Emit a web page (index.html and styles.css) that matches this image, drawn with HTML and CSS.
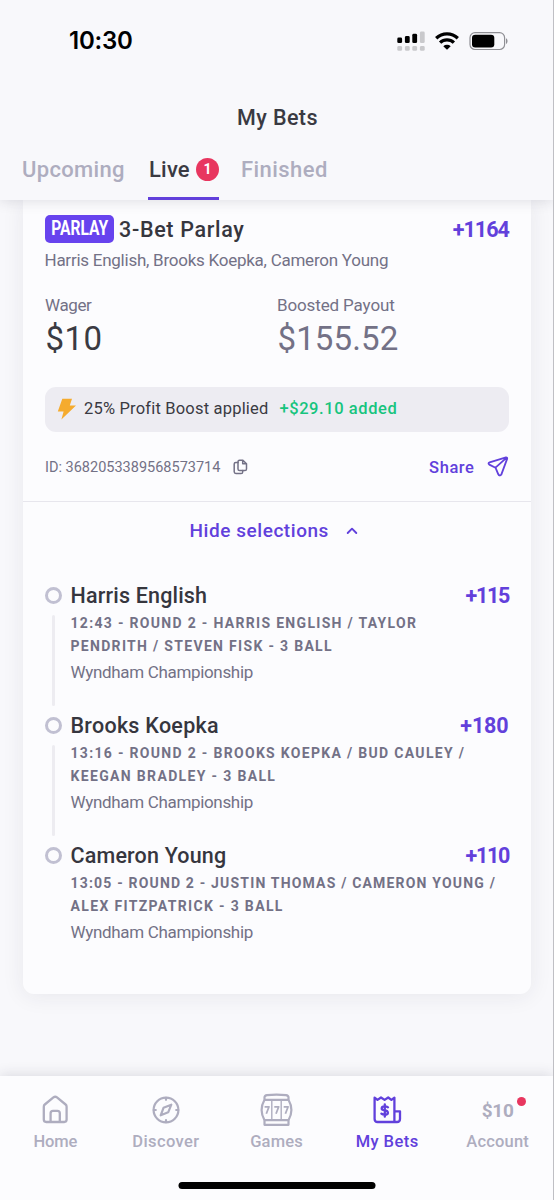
FILE: index.html
```html
<!DOCTYPE html>
<html lang="en">
<head>
<meta charset="utf-8">
<title>My Bets</title>
<link rel="stylesheet" href="styles.css">
</head>
<body>
<div class="screen">
  <header class="header">
    <div class="status">
      <span class="clock">10:30</span>
      <svg class="status-icons" width="112" height="22" viewBox="396 30 112 22">
        <g fill="#000"><rect x="397.3" y="37.5" width="4.8" height="5.6" rx="1.4"/><rect x="404.9" y="36" width="4.8" height="7.1" rx="1.4"/><rect x="412.3" y="33.8" width="4.8" height="9.3" rx="1.4"/></g>
        <g fill="#c9c9cc"><rect x="419.9" y="31.5" width="4.8" height="11.6" rx="1.4"/><rect x="397.3" y="46" width="4.8" height="4.8" rx="1.4"/><rect x="404.9" y="46" width="4.8" height="4.8" rx="1.4"/><rect x="412.3" y="46" width="4.8" height="4.8" rx="1.4"/><rect x="419.9" y="46" width="4.8" height="4.8" rx="1.4"/></g>
        <g fill="none" stroke="#000" stroke-width="3.3"><path d="M436.200 38.200a15.600 15.600 0 0 1 21.600 0"/><path d="M440.100 42.600a10 10 0 0 1 13.800 0"/></g>
        <path d="M443.300 46.200a5.400 5.400 0 0 1 7.400 0l-3.700 3.600z"/>
        <rect x="470" y="32.700" width="34.600" height="16.800" rx="5" fill="none" stroke="#8f8f94" stroke-width="1.200"/>
        <rect x="472" y="34.700" width="22.300" height="12.800" rx="3.300"/>
        <path d="M506 38.300c2 .8 2 4.800 0 5.600z" fill="#8f8f94"/>
      </svg>
    </div>
    <h1 class="title">My Bets</h1>
    <nav class="tabs">
      <a class="tab upcoming">Upcoming</a>
      <a class="tab active">Live<span class="count">1</span></a>
      <a class="tab finished">Finished</a>
    </nav>
  </header>

  <main class="content">
    <article class="card">
      <section class="summary">
        <div class="heading">
          <span class="badge"><span class="badge-text">PARLAY</span></span>
          <h2 class="name bet-name">3-Bet Parlay</h2>
          <span class="odds odds-total">+1164</span>
        </div>
        <p class="players">Harris English, Brooks Koepka, Cameron Young</p>
        <div class="amounts">
          <div><p class="label wager">Wager</p><p class="amount stake">$10</p></div>
          <div><p class="label">Boosted Payout</p><p class="amount payout">$155.52</p></div>
        </div>
        <div class="boost">
          <svg width="20" height="22" viewBox="0 0 20 22"><path d="M5.300 .7H15L12.800 7.600H19L4.400 21.500L6.600 13.600H.8z" fill="#f5ab2e"/></svg>
          <span class="boost-text">25% Profit Boost applied</span>
          <span class="boost-added">+$29.10 added</span>
        </div>
        <div class="meta">
          <span class="bet-id">ID: 3682053389568573714</span>
          <svg class="copy" width="15" height="16" viewBox="0 0 15 16" fill="none" stroke="#737186" stroke-width="1.500" stroke-linejoin="round" stroke-linecap="round"><path d="M6.600 1.200h3.300l3.600 3.500v5.200a1.600 1.600 0 0 1-1.600 1.600H6.600A1.600 1.600 0 0 1 5 9.900V2.800a1.600 1.600 0 0 1 1.600-1.600zM9.700 1.400v3.400h3.600"/><path d="M5 3.400H2.800a1.600 1.600 0 0 0-1.600 1.600v7.800a1.700 1.700 0 0 0 1.700 1.700h5.200a1.600 1.600 0 0 0 1.600-1.600v-1.400"/></svg>
          <span class="share">Share</span>
          <svg width="22" height="22" viewBox="0 0 22 22" fill="none" stroke="#6140dc" stroke-width="1.800" stroke-linejoin="round" stroke-linecap="round"><path d="M19 1.400L2.600 6.300Q.6 7.200 2.300 8.600L8.500 11.700L11.300 18.300Q12.500 20.500 14.300 18.600L20.200 2.600Q20.300 1.200 19 1.400zM8.500 11.700L19.700 1.700"/></svg>
        </div>
      </section>
      <div class="toggle">
        <span>Hide selections</span>
        <svg width="12" height="8" viewBox="0 0 12 8" fill="none" stroke="#6140dc" stroke-width="1.900" stroke-linecap="round" stroke-linejoin="round"><path d="M1.700 6L6 1.700L10.300 6"/></svg>
      </div>
      <ol class="legs">
        <li class="leg">
          <div class="rail"><i class="ring"></i><i class="line"></i></div>
          <div class="leg-body">
            <div class="leg-head"><h3 class="name english">Harris English</h3><span class="odds odds-115">+115</span></div>
            <p class="market">12:43 - ROUND 2 - HARRIS ENGLISH / TAYLOR<br>PENDRITH / STEVEN FISK - 3 BALL</p>
            <p class="event">Wyndham Championship</p>
          </div>
        </li>
        <li class="leg">
          <div class="rail"><i class="ring"></i><i class="line"></i></div>
          <div class="leg-body">
            <div class="leg-head"><h3 class="name koepka">Brooks Koepka</h3><span class="odds odds-180">+180</span></div>
            <p class="market">13:16 - ROUND 2 - BROOKS KOEPKA / BUD CAULEY /<br><span class="wide">KEEGAN BRADLEY - 3 BALL</span></p>
            <p class="event">Wyndham Championship</p>
          </div>
        </li>
        <li class="leg">
          <div class="rail"><i class="ring"></i></div>
          <div class="leg-body">
            <div class="leg-head"><h3 class="name young">Cameron Young</h3><span class="odds odds-110">+110</span></div>
            <p class="market last">13:05 - ROUND 2 - JUSTIN THOMAS / CAMERON YOUNG /<br><span class="wide">ALEX FITZPATRICK - 3 BALL</span></p>
            <p class="event">Wyndham Championship</p>
          </div>
        </li>
      </ol>
    </article>
  </main>

  <footer class="footer">
    <nav class="nav">
      <a class="item home"><svg width="34" height="34" viewBox="0 0 34 34" fill="none" stroke="currentColor" stroke-width="2.300" stroke-linejoin="round"><path d="M15.400 4.400L6.800 11.500Q5.800 12.300 5.800 13.700V26.600Q5.800 29 8.200 29H26.200Q28.600 29 28.600 26.600V13.700Q28.600 12.300 27.600 11.500L19 4.400Q17.200 3 15.400 4.400z"/><path d="M12.600 29V20.200Q12.600 17.800 15 17.800H19.400Q21.800 17.800 21.800 20.200V29"/></svg><span>Home</span></a>
      <a class="item discover"><svg width="34" height="34" viewBox="0 0 34 34" fill="none" stroke="currentColor" stroke-width="2.200" stroke-linejoin="round" stroke-linecap="round"><circle cx="17" cy="17" r="12.400"/><path d="M17 4.800v2M17 27.200v2M4.800 17h2M27.200 17h2M11.700 22.300L14.500 14.800L22.300 11.700L19.200 19.300z"/></svg><span>Discover</span></a>
      <a class="item games"><svg width="34" height="34" viewBox="0 0 34 34" fill="none" stroke="currentColor" stroke-width="2.200" stroke-linejoin="round"><path d="M5.500 6.800Q-.3 17 5.500 27.200H29.500Q35.300 17 29.500 6.800z"/><path d="M5.500 6.500V4.200Q5.700 2.400 8 2.100Q17.500 1 27 2.100Q29.300 2.400 29.500 4.200V6.500M5.500 27.500V31.800H29.500V27.500"/><path d="M12.800 7v20.500M22.200 7v20.500" stroke-width="1.400"/><path d="M5.600 13.800h4.400L7.300 20.800M15.300 13.800h4.400L17 20.800M24.700 13.800h4.400L26.400 20.800" stroke-width="1.800"/></svg><span>Games</span></a>
      <a class="item bets"><svg width="34" height="34" viewBox="0 0 34 34" fill="none" stroke="currentColor" stroke-width="2.300" stroke-linejoin="round" stroke-linecap="round"><path d="M24.400 29H7.600Q4.600 29 4.600 26V4.700L7.500 6.900L11 4.500L14.600 6.900L18.200 4.500L21.400 6.900L24.400 4.700V29H27Q30 29 30 26V18.300H24.400"/><path d="M18 14.300Q16.900 13.400 14.700 13.400Q11.700 13.400 11.700 15.500Q11.700 17 14.600 17.300Q17.900 17.600 17.900 19.700Q17.900 21.700 14.800 21.700Q12.500 21.700 11.400 20.600M14.800 11.300V23.700"/></svg><span>My Bets</span></a>
      <a class="item account"><b class="balance">$10<i class="dot"></i></b><span>Account</span></a>
    </nav>
    <div class="home-bar"></div>
  </footer>
</div>
</body>
</html>
```
FILE: styles.css
```css
* { box-sizing: border-box; }
body, h1, h2, h3, p, ol { margin: 0; padding: 0; }
body { background: #f8f8fb; font-family: Roboto, "Liberation Sans", sans-serif; color: #3a3a42; }
svg { display: block; flex: none; }

.screen {
  width: 554px; height: 1200px; overflow: hidden;
  display: flex; flex-direction: column;
  background: #f8f8fb; border-right: 1px solid #bfbfc4;
}

.header {
  position: relative; z-index: 2;
  height: 200px; flex: none; display: flex; flex-direction: column;
  background: #f8f8fb; box-shadow: 0 2px 12px rgba(40, 40, 60, .13);
}
.status { height: 82px; display: flex; justify-content: space-between; padding: 0 45px 0 69px; align-items: center; }
.clock { font: 600 24px/30px Inter, sans-serif; letter-spacing: -.23px; color: #000; }
.title { height: 69px; padding-left: 2px; font-size: 21.5px; line-height: 71px; font-weight: 500; letter-spacing: .4px; text-align: center; }
.tabs { height: 49px; display: flex; padding-left: 22px; }
.tab { font-size: 22px; line-height: 37px; font-weight: 500; color: #aeadbf; }
.upcoming { width: 126px; letter-spacing: .32px; }
.active { display: flex; align-items: center; width: 71px; height: 49px; padding: 0 0 9px 1px; border-bottom: 3px solid #6240db; color: #3a3a42; letter-spacing: .2px; }
.count {
  width: 23px; height: 23px; margin-left: auto; border-radius: 50%;
  background: #e8365f; color: #fff; font-size: 14px; font-weight: 700; line-height: 23px; text-align: center; letter-spacing: 0;
}
.finished { margin-left: 22px; letter-spacing: .44px; }

.content { flex: 1; padding: 0 22px 0 22.5px; }
.card {
  height: 794px; background: #fcfcfe; border-radius: 0 0 11px 11px;
  box-shadow: 0 2px 22px rgba(40, 40, 60, .08);
}
.summary { height: 302px; padding: 15px 22.5px 0 22.5px; border-bottom: 1px solid #e7e6ed; }
.heading { height: 28px; display: flex; align-items: center; }
.badge { width: 69px; height: 28px; border-radius: 5px; background: #6743ee; display: flex; align-items: center; justify-content: center; }
.badge-text { color: #fff; font-weight: 700; font-size: 19.5px; line-height: 28px; transform: scaleX(.8); }
.name { position: relative; top: 1px; font-size: 21.5px; line-height: 26px; font-weight: 500; color: #36363e; }
.bet-name { margin-left: 5px; letter-spacing: .68px; }
.odds { position: relative; top: 1px; margin-left: auto; font-size: 21.5px; line-height: 26px; font-weight: 700; color: #6240db; }
.odds-total { margin-right: -.5px; letter-spacing: -.95px; }
.players { margin: 7px 0 0 -.5px; font-size: 17px; line-height: 20px; letter-spacing: -.25px; color: #737186; }
.amounts { display: grid; grid-template-columns: 232px 1fr; margin-top: 25px; }
.label { font-size: 17px; line-height: 20px; letter-spacing: -.13px; color: #737186; }
.wager { letter-spacing: -.4px; }
.amount { margin-top: 4px; padding-left: .5px; font-size: 33px; line-height: 40px; }
.stake { letter-spacing: .45px; }
.payout { color: #737186; letter-spacing: .12px; }
.boost { height: 45px; margin-top: 28px; padding: 0 12px 2px; display: flex; align-items: center; border-radius: 11px; background: #edecf2; font-size: 16.5px; line-height: 42px; }
.boost-text { margin-left: 7px; letter-spacing: .19px; }
.boost-added { margin-left: 11px; font-weight: 500; letter-spacing: .58px; color: #17c47e; }
.meta { height: 30px; margin-top: 20px; display: flex; align-items: center; }
.bet-id { font-size: 14.5px; letter-spacing: 0; color: #737186; }
.copy { margin-left: 12.5px; }
.share { margin-left: auto; margin-right: 12px; font-size: 16.5px; font-weight: 500; letter-spacing: .57px; color: #6140dc; }

.toggle { height: 58px; display: flex; align-items: center; justify-content: center; gap: 17px; padding: 0 6px 1px 0; font-size: 19px; font-weight: 500; letter-spacing: .55px; color: #6140dc; }

.legs { list-style: none; padding: 22px 22.5px 0; }
.leg { display: flex; height: 130px; }
.rail { width: 17px; display: flex; flex-direction: column; align-items: center; padding-top: 5px; }
.ring { width: 17px; height: 17px; border: 3px solid #c1c0d2; border-radius: 50%; }
.line { width: 3px; height: 91px; margin-top: 11px; border-radius: 2px; background: #edecf1; }
.leg-body { flex: 1; padding-left: 8.5px; }
.leg-head { display: flex; }
.english { letter-spacing: .18px; }
.koepka { letter-spacing: .27px; }
.young { letter-spacing: .18px; }
.odds-115, .odds-110 { margin-right: -.5px; letter-spacing: -1.3px; }
.odds-180 { letter-spacing: -.13px; }
.market { margin-top: 4px; font-size: 14px; line-height: 22.5px; font-weight: 700; letter-spacing: 1.31px; white-space: nowrap; color: #737186; }
.last { letter-spacing: 1.18px; }
.wide { letter-spacing: 1.34px; }
.event { margin-top: 5px; font-size: 17px; line-height: 20px; letter-spacing: -.33px; color: #737186; }

.footer { position: relative; z-index: 2; height: 124px; flex: none; background: #fcfcfe; box-shadow: 0 -2px 12px rgba(40, 40, 60, .13); }
.nav { display: grid; grid-template-columns: repeat(5, 1fr); height: 106px; padding-top: 17px; }
.item { display: flex; flex-direction: column; align-items: center; font-size: 16.5px; line-height: 20px; font-weight: 500; gap: 4.5px; color: #aeadbf; }
.home { letter-spacing: -.15px; }
.discover { letter-spacing: .39px; }
.games { letter-spacing: .16px; }
.bets { letter-spacing: .44px; color: #6140dc; }
.account { letter-spacing: .19px; }
.balance { position: relative; height: 34px; font-size: 19px; line-height: 35px; font-weight: 700; letter-spacing: -.2px; }
.dot { position: absolute; top: 4px; right: -12px; width: 9px; height: 9px; border-radius: 50%; background: #e8365f; }
.home-bar { width: 197px; height: 7px; margin: 0 auto; border-radius: 4px; background: #000; transform: translateX(.5px); }
```
